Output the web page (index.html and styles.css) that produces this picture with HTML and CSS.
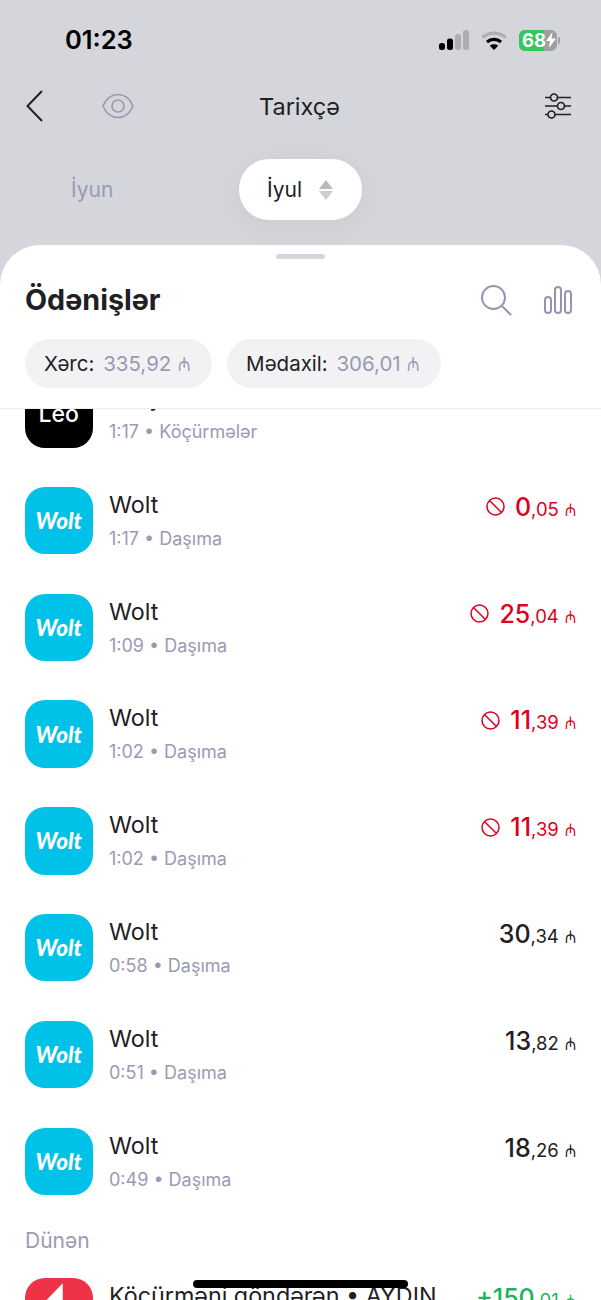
FILE: index.html
```html
<!DOCTYPE html>
<html>
<head>
  <meta charset="utf-8">
  <title>Tarixçə</title>
  <link rel="stylesheet" href="styles.css">
</head>
<body>
  <div class="phone">
    <div class="top">
      <div class="status-bar">
        <span class="time">01:23</span>
        <div class="status-icons">
          <svg class="signal" width="30" height="20" viewBox="0 0 30 20">
            <rect x="0" y="13" width="6" height="7" rx="2.5" fill="#000"/>
            <rect x="8" y="8.5" width="6" height="11.5" rx="2.5" fill="#000"/>
            <rect x="16" y="4" width="6" height="16" rx="2.5" fill="#aeaeb1"/>
            <rect x="24" y="0" width="6" height="20" rx="2.5" fill="#aeaeb1"/>
          </svg>
          <svg class="wifi" width="26" height="19" viewBox="0 0 26 19">
            <path d="M1.5 6.5C8 .6 18 .6 24.5 6.5" fill="none" stroke="#aeaeb1" stroke-width="3.4"/>
            <path d="M6 11C10 7.6 16 7.6 20 11" fill="none" stroke="#000" stroke-width="3.2"/>
            <path d="M13 19L8.800 14.700C11.200 12.800 14.800 12.800 17.200 14.700Z" fill="#000"/>
          </svg>
          <div class="battery">
            <span class="battery-level">68</span>
            <span class="battery-rest">
              <svg width="10" height="16" viewBox="0 0 10 16"><path d="M6.500 0L0 9H4L2.800 16L10 6.500H5.500Z" fill="#fff"/></svg>
            </span>
          </div>
          <span class="battery-tip"></span>
        </div>
      </div>

      <div class="nav">
        <div class="nav-left">
          <svg width="20" height="32" viewBox="0 0 20 32"><path d="M17 1L2.500 16L17 31" fill="none" stroke="#1f2024" stroke-width="2"/></svg>
          <svg class="eye" width="32" height="26" viewBox="0 0 32 26">
            <path d="M1 13C4 6 9.500 1.500 16 1.500S28 6 31 13C28 20 22.500 24.500 16 24.500S4 20 1 13Z" fill="none" stroke="#9a9ab4" stroke-width="1.700"/>
            <circle cx="16" cy="13" r="6" fill="none" stroke="#9a9ab4" stroke-width="1.700"/>
          </svg>
        </div>
        <span class="nav-title">Tarixçə</span>
        <svg class="filter" width="28" height="26" viewBox="0 0 28 26" fill="none" stroke="#1f2024" stroke-width="1.700">
          <path d="M1 4.500H6M14 4.500H27M1 13H13M21 13H27M1 21.500H3.500M11.500 21.500H27"/>
          <circle cx="10" cy="4.500" r="3.500"/>
          <circle cx="17" cy="13" r="3.500"/>
          <circle cx="7.500" cy="21.500" r="3.500"/>
        </svg>
      </div>

      <div class="months">
        <span class="month-prev">İyun</span>
        <div class="month-pill">
          <span>İyul</span>
          <span class="sort-arrows"><i class="arrow-up"></i><i class="arrow-down"></i></span>
        </div>
      </div>
    </div>

    <div class="sheet">
      <div class="handle"></div>
      <div class="sheet-head">
        <h1>Ödənişlər</h1>
        <div class="head-icons">
          <svg width="32" height="32" viewBox="0 0 32 32" fill="none" stroke="#9595b0" stroke-width="2">
            <circle cx="13.500" cy="13.500" r="11.500"/>
            <path d="M22 22L30.500 30.500" stroke-linecap="round"/>
          </svg>
          <svg width="28" height="28" viewBox="0 0 28 28" fill="none" stroke="#9595b0" stroke-width="2">
            <rect x="1" y="11" width="6" height="16" rx="3"/>
            <rect x="11" y="1" width="6" height="26" rx="3"/>
            <rect x="21" y="5" width="6" height="22" rx="3"/>
          </svg>
        </div>
      </div>
      <div class="totals">
        <div class="total-chip">Xərc: <span class="muted">335,92 <span class="manat">₼</span></span></div>
        <div class="total-chip">Mədaxil: <span class="muted">306,01 <span class="manat">₼</span></span></div>
      </div>

      <div class="list">
        <div class="list-inner">
          <div class="row">
            <div class="app-icon leo">Leo</div>
            <div class="row-text">
              <div class="row-title">Leoya</div>
              <div class="row-sub">1:17 • Köçürmələr</div>
            </div>
          </div>

          <div class="row">
            <div class="app-icon wolt">Wolt</div>
            <div class="row-text">
              <div class="row-title">Wolt</div>
              <div class="row-sub">1:17 • Daşıma</div>
            </div>
            <div class="amount red">
              <svg class="blocked" width="19" height="19" viewBox="0 0 19 19"><circle cx="9.500" cy="9.500" r="8.500"/><path d="M3.500 3.500L15.500 15.500"/></svg>
              <b>0</b><small>,05 <span class="manat">₼</span></small>
            </div>
          </div>

          <div class="row">
            <div class="app-icon wolt">Wolt</div>
            <div class="row-text">
              <div class="row-title">Wolt</div>
              <div class="row-sub">1:09 • Daşıma</div>
            </div>
            <div class="amount red">
              <svg class="blocked" width="19" height="19" viewBox="0 0 19 19"><circle cx="9.500" cy="9.500" r="8.500"/><path d="M3.500 3.500L15.500 15.500"/></svg>
              <b>25</b><small>,04 <span class="manat">₼</span></small>
            </div>
          </div>

          <div class="row">
            <div class="app-icon wolt">Wolt</div>
            <div class="row-text">
              <div class="row-title">Wolt</div>
              <div class="row-sub">1:02 • Daşıma</div>
            </div>
            <div class="amount red">
              <svg class="blocked" width="19" height="19" viewBox="0 0 19 19"><circle cx="9.500" cy="9.500" r="8.500"/><path d="M3.500 3.500L15.500 15.500"/></svg>
              <b>11</b><small>,39 <span class="manat">₼</span></small>
            </div>
          </div>

          <div class="row">
            <div class="app-icon wolt">Wolt</div>
            <div class="row-text">
              <div class="row-title">Wolt</div>
              <div class="row-sub">1:02 • Daşıma</div>
            </div>
            <div class="amount red">
              <svg class="blocked" width="19" height="19" viewBox="0 0 19 19"><circle cx="9.500" cy="9.500" r="8.500"/><path d="M3.500 3.500L15.500 15.500"/></svg>
              <b>11</b><small>,39 <span class="manat">₼</span></small>
            </div>
          </div>

          <div class="row">
            <div class="app-icon wolt">Wolt</div>
            <div class="row-text">
              <div class="row-title">Wolt</div>
              <div class="row-sub">0:58 • Daşıma</div>
            </div>
            <div class="amount"><b>30</b><small>,34 <span class="manat">₼</span></small></div>
          </div>

          <div class="row">
            <div class="app-icon wolt">Wolt</div>
            <div class="row-text">
              <div class="row-title">Wolt</div>
              <div class="row-sub">0:51 • Daşıma</div>
            </div>
            <div class="amount"><b>13</b><small>,82 <span class="manat">₼</span></small></div>
          </div>

          <div class="row">
            <div class="app-icon wolt">Wolt</div>
            <div class="row-text">
              <div class="row-title">Wolt</div>
              <div class="row-sub">0:49 • Daşıma</div>
            </div>
            <div class="amount"><b>18</b><small>,26 <span class="manat">₼</span></small></div>
          </div>

          <div class="day-label">Dünən</div>

          <div class="row">
            <div class="app-icon transfer">
              <svg width="68" height="68" viewBox="0 0 68 68"><path d="M38 6V60L12 33Z" fill="#fff"/></svg>
            </div>
            <div class="row-text">
              <div class="row-title">Köçürməni göndərən • AYDIN</div>
              <div class="row-sub">23:40 • Köçürmələr</div>
            </div>
            <div class="amount green"><b>+150</b><small>,01 <span class="manat">₼</span></small></div>
          </div>
        </div>
      </div>
    </div>

    <div class="home-indicator"></div>
  </div>
</body>
</html>
```

FILE: styles.css
```css
* {
  box-sizing: border-box;
}

html, body {
  margin: 0;
  padding: 0;
}

body {
  font-family: Inter, "Noto Sans", "DejaVu Sans", sans-serif;
  color: #1f2024;
  background-color: #d5d6db;
}

.phone {
  position: relative;
  width: 601px;
  height: 1300px;
  overflow: hidden;
  display: flex;
  flex-direction: column;
}

/* Top grey part */
.top {
  height: 245px;
  flex: none;
  background-color: #d5d6db;
}

.status-bar {
  height: 80px;
  padding: 25px 41px 0 65px;
  display: flex;
  justify-content: space-between;
  align-items: flex-start;
}

.time {
  font-size: 25.5px;
  line-height: 30px;
  font-weight: 600;
  color: #000;
}

.status-icons {
  display: flex;
  align-items: center;
  height: 30px;
}

.signal {
  margin-right: 12px;
}

.wifi {
  margin-right: 12px;
}

.battery {
  width: 38px;
  height: 21px;
  border-radius: 6px;
  overflow: hidden;
  display: flex;
  background-color: #9f9fa2;
}

.battery-level {
  width: 25px;
  background-color: #34c759;
  color: #fff;
  font-size: 18.500px;
  font-weight: 700;
  line-height: 21px;
  padding-left: 3px;
}

.battery-rest {
  width: 13px;
  display: flex;
  align-items: center;
  justify-content: center;
}

.battery-tip {
  width: 2px;
  height: 7px;
  margin-left: 1px;
  border-radius: 0 2px 2px 0;
  background-color: #9f9fa2;
}

.nav {
  height: 52px;
  padding: 0 29px 0 25px;
  display: flex;
  justify-content: space-between;
  align-items: center;
  position: relative;
}

.nav-left {
  display: flex;
  align-items: center;
  gap: 57px;
}

.nav-title {
  font-size: 23.500px;
  font-weight: 400;
  position: absolute;
  left: 0;
  right: 2px;
  text-align: center;
  pointer-events: none;
}

.months {
  margin-top: 27px;
  padding-left: 71px;
  display: flex;
  align-items: center;
}

.month-prev {
  width: 168px;
  font-size: 21px;
  color: #9a9ab4;
}

.month-pill {
  width: 123px;
  height: 61px;
  border-radius: 30px;
  background-color: #fff;
  box-shadow: 0 6px 32px rgba(0, 0, 0, 0.05);
  display: flex;
  align-items: center;
  padding-left: 28px;
  gap: 17px;
  font-size: 21px;
}

.sort-arrows {
  display: flex;
  flex-direction: column;
  gap: 2px;
}

.sort-arrows i {
  display: block;
  width: 0;
  height: 0;
  border-left: 7px solid transparent;
  border-right: 7px solid transparent;
}

.arrow-up {
  border-bottom: 9px solid #b9b9bf;
}

.arrow-down {
  border-top: 9px solid #cdcdd2;
}

/* White sheet */
.sheet {
  flex: 1;
  min-height: 0;
  background-color: #fff;
  border-radius: 40px 40px 0 0;
  display: flex;
  flex-direction: column;
}

.handle {
  width: 49px;
  height: 5px;
  flex: none;
  margin: 9px auto 0;
  border-radius: 3px;
  background-color: #d5d6db;
}

.sheet-head {
  flex: none;
  height: 56px;
  margin-top: 13px;
  padding: 0 29px 0 25px;
  display: flex;
  justify-content: space-between;
  align-items: center;
}

h1 {
  margin: -2px 0 0;
  font-size: 28.700px;
  font-weight: 700;
}

.head-icons {
  display: flex;
  align-items: center;
  gap: 32px;
}

.totals {
  flex: none;
  margin-top: 11px;
  padding: 0 25px;
  display: flex;
  gap: 15px;
}

.total-chip {
  height: 49px;
  padding: 0 20px 0 19px;
  border-radius: 25px;
  background-color: #f2f2f4;
  font-size: 20.500px;
  line-height: 49px;
  white-space: nowrap;
}

.muted {
  color: #9a9ab4;
  margin-left: 3px;
}

/* the installed manat glyph is short and wide, stretch it */
.manat {
  display: inline-block;
  font-family: "DejaVu Sans", sans-serif;
  font-size: 18px;
  font-weight: 400;
  transform: scale(0.85, 1.1);
  transform-origin: center bottom;
  line-height: 1;
}

.list {
  flex: 1;
  min-height: 0;
  margin-top: 20px;
  border-top: 1px solid #eeeef0;
  overflow: hidden;
}

/* list is scrolled a bit, first row is cut by the header */
.list-inner {
  margin-top: -46px;
}

.row {
  height: 106.8px;
  padding: 17px 25px 0;
  display: flex;
  align-items: flex-start;
}

.app-icon {
  width: 67.500px;
  height: 67.500px;
  flex: none;
  border-radius: 20px;
  display: flex;
  align-items: center;
  justify-content: center;
  color: #fff;
}

.leo {
  background-color: #000;
  font-size: 23px;
  font-weight: 500;
}

.wolt {
  background-color: #00c2e8;
  font-family: Lato, sans-serif;
  font-size: 22.500px;
  font-weight: 900;
  font-style: italic;
}

.transfer {
  background-color: #ef3346;
}

.row-text {
  flex: 1;
  min-width: 0;
  margin-left: 16.500px;
  padding-top: 2px;
}

.row-title {
  font-size: 23.300px;
  line-height: 32px;
  white-space: nowrap;
}

.row-sub {
  margin-top: 2px;
  font-size: 18px;
  line-height: 32px;
  color: #9a9ab4;
  white-space: nowrap;
}

.amount {
  flex: none;
  margin-top: 4px;
  line-height: 32px;
  display: flex;
  align-items: baseline;
  white-space: pre;
}

.amount b {
  font-size: 25px;
  font-weight: 500;
}

.amount small {
  font-size: 18.500px;
}

.amount .manat {
  font-size: 16px;
  margin-right: -1px;
}

.amount.red {
  color: #e0001b;
}

.amount.green {
  color: #1eb45f;
}

.blocked {
  align-self: center;
  margin-right: 10px;
  margin-top: -2px;
  fill: none;
  stroke: #e0001b;
  stroke-width: 1.500;
}

.day-label {
  height: 43.200px;
  padding-left: 25px;
  font-size: 21px;
  line-height: 47px;
  color: #9a9ab4;
}

.home-indicator {
  position: absolute;
  left: 193px;
  top: 1280px;
  width: 215px;
  height: 8px;
  border-radius: 4px;
  background-color: #000;
}
```
